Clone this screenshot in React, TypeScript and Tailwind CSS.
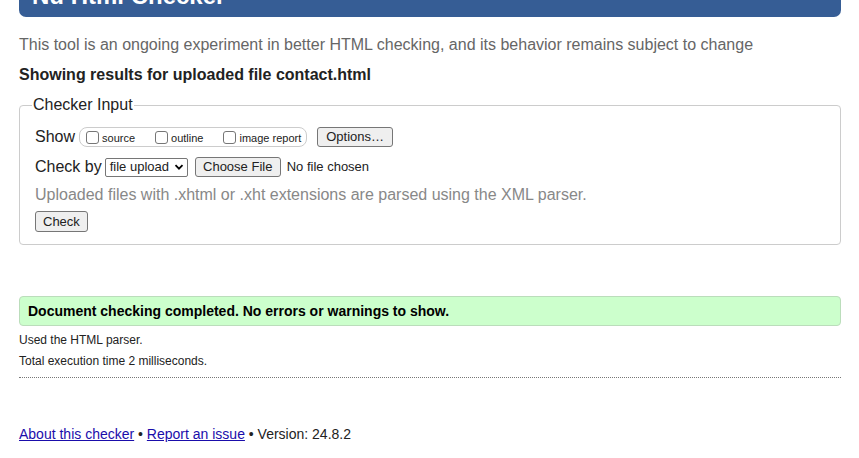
export default function App() {
  const font = { fontFamily: '"Liberation Sans", Arial, sans-serif' }
  return (
    <div className="w-[859px] h-[458px] overflow-hidden bg-white text-[#222]" style={font}>
      <div className="ml-[19px] mr-[18px]">
        <div className="h-[17px] bg-[#365d95] rounded-b-[7px] overflow-hidden pl-[13px]">
          <div className="-mt-[16px] text-[24px] leading-none font-bold text-white">Nu Html Checker</div>
        </div>

        <p className="mt-[18px] text-[16px] leading-[20px] text-[#666]">
          This tool is an ongoing experiment in better HTML checking, and its behavior remains subject to change
        </p>
        <p className="mt-[10px] text-[16px] leading-[20px] font-bold text-[#222]">
          Showing results for uploaded file contact.html
        </p>

        <fieldset className="mt-[10px] border border-[#ccc] rounded-[4px] pl-[15px] pr-[10px] pb-[12px]">
          <legend className="ml-[-3px] px-[1px] text-[16px] leading-[20px] text-[#222]">Checker Input</legend>

          <div className="mt-[11px] flex items-center h-[22px]">
            <span className="text-[16px]">Show</span>
            <span className="ml-[4px] flex items-center h-[20px] border border-[#ccc] rounded-[8px] pl-[6px] pr-[5px] text-[11px]">
              <span className="w-[13px] h-[13px] border border-[#767676] rounded-[3px]" />
              <span className="ml-[3px] mt-[2px]">source</span>
              <span className="ml-[20px] w-[13px] h-[13px] border border-[#767676] rounded-[3px]" />
              <span className="ml-[3px] mt-[2px]">outline</span>
              <span className="ml-[20px] w-[13px] h-[13px] border border-[#767676] rounded-[3px]" />
              <span className="ml-[3px] mt-[2px]">image report</span>
            </span>
            <span className="ml-[10px] h-[20px] flex items-center border border-[#767676] rounded-[3px] bg-[#efefef] px-[8px] text-[13px]">
              Options…
            </span>
          </div>

          <div className="mt-[8px] flex items-center h-[22px]">
            <span className="text-[16px]">Check by</span>
            <span className="ml-[3px] w-[83px] h-[19px] flex items-center justify-between border border-[#767676] rounded-[2px] bg-white pl-[4px] pr-[3px] text-[13px]">
              file upload
              <svg width="10" height="10" viewBox="0 0 10 10">
                <path d="M1.5 3.2 L5 6.7 L8.5 3.2" fill="none" stroke="#000" strokeWidth="1.8" />
              </svg>
            </span>
            <span className="ml-[7px] w-[86px] h-[20px] flex items-center justify-center border border-[#767676] rounded-[3px] bg-[#efefef] text-[13px]">
              Choose File
            </span>
            <span className="ml-[6px] text-[13px]">No file chosen</span>
          </div>

          <p className="mt-[6px] text-[16px] leading-[22px] text-[#888]">
            Uploaded files with .xhtml or .xht extensions are parsed using the XML parser.
          </p>

          <div className="mt-[5px] flex">
            <span className="h-[21px] flex items-center border border-[#767676] rounded-[3px] bg-[#efefef] px-[7px] text-[13px]">
              Check
            </span>
          </div>
        </fieldset>

        <div className="mt-[51px] h-[30px] flex items-center border border-[#bbddbb] rounded-[4px] bg-[#ccffcc] pl-[8px] text-[14px] font-bold text-black">
          Document checking completed. No errors or warnings to show.
        </div>

        <p className="mt-[4px] text-[12px] leading-[21px] text-[#222]">Used the HTML parser.</p>
        <p className="text-[12px] leading-[21px] text-[#222]">Total execution time 2 milliseconds.</p>
        <div className="mt-[5px] border-t border-dotted border-[#777]" />

        <p className="mt-[47px] text-[14px] leading-[18px] text-[#222]">
          <a className="text-[#1a0dab] underline" href="#">About this checker</a>
          {" • "}
          <a className="text-[#1a0dab] underline" href="#">Report an issue</a>
          {" • Version: 24.8.2"}
        </p>
      </div>
    </div>
  )
}
